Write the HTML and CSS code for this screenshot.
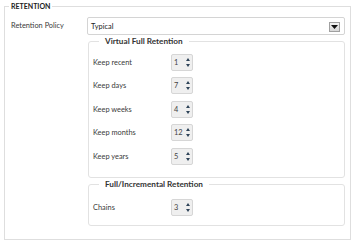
FILE: index.html
```html
<!DOCTYPE html>
<html lang="en">
<head>
    <meta charset="UTF-8">
    <meta name="viewport" content="width=device-width, initial-scale=1.0">
    <title>Retention</title>
    <link rel="stylesheet" href="styles.css">
</head>
<body>
    <fieldset class="section">
        <legend class="section-title">RETENTION</legend>

        <div class="form-row">
            <label class="form-label">Retention Policy</label>
            <div class="select">
                <span class="select-value">Typical</span>
                <span class="select-button">
                    <svg width="7" height="4" viewBox="0 0 7 4"><path d="M0 0h7L3.5 4z" fill="#111"/></svg>
                </span>
            </div>
        </div>

        <div class="form-row">
            <span class="form-label"></span>
            <div class="groups">
                <fieldset class="group">
                    <legend class="group-title">Virtual Full Retention</legend>
                    <div class="field">
                        <label>Keep recent</label>
                        <div class="spinner"><span class="spinner-value">1</span><span class="spinner-arrows"><i class="up"></i><i class="down"></i></span></div>
                    </div>
                    <div class="field">
                        <label>Keep days</label>
                        <div class="spinner"><span class="spinner-value">7</span><span class="spinner-arrows"><i class="up"></i><i class="down"></i></span></div>
                    </div>
                    <div class="field">
                        <label>Keep weeks</label>
                        <div class="spinner"><span class="spinner-value">4</span><span class="spinner-arrows"><i class="up"></i><i class="down"></i></span></div>
                    </div>
                    <div class="field">
                        <label>Keep months</label>
                        <div class="spinner"><span class="spinner-value">12</span><span class="spinner-arrows"><i class="up"></i><i class="down"></i></span></div>
                    </div>
                    <div class="field">
                        <label>Keep years</label>
                        <div class="spinner"><span class="spinner-value">5</span><span class="spinner-arrows"><i class="up"></i><i class="down"></i></span></div>
                    </div>
                </fieldset>

                <fieldset class="group group-short">
                    <legend class="group-title">Full/Incremental Retention</legend>
                    <div class="field">
                        <label>Chains</label>
                        <div class="spinner"><span class="spinner-value">3</span><span class="spinner-arrows"><i class="up"></i><i class="down"></i></span></div>
                    </div>
                </fieldset>
            </div>
        </div>
    </fieldset>
</body>
</html>
```

FILE: styles.css
```css
body {
    font-family: 'Lato', 'Open Sans', sans-serif;
    font-size: 7.4px;
    color: #3a3a3a;
    margin: 0;
    padding: 1px 4px 3px 4px;
    background: #fff;
}

.section {
    margin: 0;
    padding: 5px 5px 12px 6px;
    border: 1px solid #dedede;
    min-width: 0;
}

.section-title {
    font-weight: bold;
    font-size: 7px;
    color: #222;
    padding: 0 2px;
    margin-left: -2px;
    line-height: 10px;
}

.form-row {
    display: flex;
}

.form-label {
    width: 76px;
    flex-shrink: 0;
    line-height: 18px;
    margin-top: 1px;
}

.select {
    flex: 1;
    height: 18px;
    box-sizing: border-box;
    border: 1px solid #d4d4d4;
    border-radius: 2px;
    display: flex;
    align-items: center;
    justify-content: space-between;
    padding: 0 4px 0 3px;
    margin-top: 1px;
}

.select-value {
    color: #222;
}

.select-button {
    width: 11px;
    height: 10px;
    box-sizing: border-box;
    border: 1px solid #a0a0a0;
    background: linear-gradient(#f4f4f4, #d8d8d8);
    display: flex;
    align-items: center;
    justify-content: center;
    margin-top: 1px;
}

.groups {
    flex: 1;
    margin-left: 1px;
    margin-top: 1px;
}

.group {
    margin: 0 0 1px 0;
    padding: 6.5px 4px 12.5px 4px;
    border: 1px solid #e2e2e2;
    border-radius: 3px;
    min-width: 0;
}

.group-short {
    padding-top: 9px;
    padding-bottom: 8.5px;
}

.group-title {
    font-weight: bold;
    font-size: 8.2px;
    color: #333;
    padding: 0 6px;
    margin-left: 6px;
    line-height: 11px;
}

.field {
    display: flex;
    align-items: center;
    height: 17px;
    margin-top: 6.5px;
}

.field:first-of-type {
    margin-top: 0;
}

.field label {
    width: 78px;
    flex-shrink: 0;
}

.spinner {
    width: 22px;
    height: 17px;
    box-sizing: border-box;
    border: 1px solid #d6d6d6;
    border-radius: 2px;
    background: #efefef;
    display: flex;
    align-items: center;
    justify-content: space-between;
    padding: 0 2px 0 2px;
}

.spinner-value {
    color: #444;
}

.spinner-arrows {
    display: flex;
    flex-direction: column;
    justify-content: space-between;
    height: 9px;
}

.spinner-arrows i {
    display: block;
    width: 0;
    height: 0;
    border-left: 2.5px solid transparent;
    border-right: 2.5px solid transparent;
}

.spinner-arrows .up {
    border-bottom: 3px solid #2e4358;
}

.spinner-arrows .down {
    border-top: 3px solid #2e4358;
}
```
